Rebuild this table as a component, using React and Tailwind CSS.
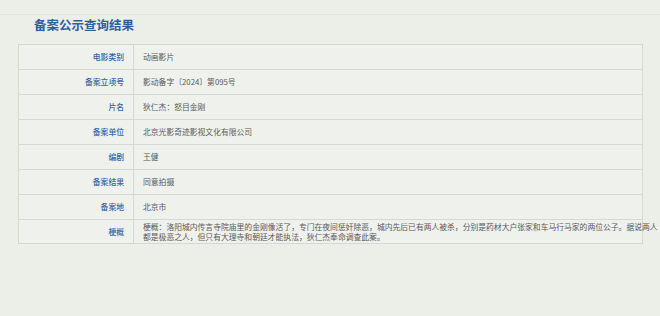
import React from "react";

const rows = [
  { label: "电影类别", value: "动画影片" },
  { label: "备案立项号", value: "影动备字〔2024〕第095号" },
  { label: "片名", value: "狄仁杰：怒目金刚" },
  { label: "备案单位", value: "北京光影奇迹影视文化有限公司" },
  { label: "编剧", value: "王健" },
  { label: "备案结果", value: "同意拍摄" },
  { label: "备案地", value: "北京市" },
];

const summaryLine1 =
  "梗概：洛阳城内传言寺院庙里的金刚像活了，专门在夜间惩奸除恶，城内先后已有两人被杀，分别是药材大户张家和车马行马家的两位公子。据说两人";
const summaryLine2 = "都是极恶之人，但只有大理寺和朝廷才能执法，狄仁杰奉命调查此案。";

const App = () => {
  return (
    <div
      className="w-[660px] h-[316px] bg-[#eceee8] overflow-hidden"
      style={{ fontFamily: '"Noto Sans CJK SC", "Noto Sans", sans-serif' }}
    >
      <div className="h-[15px] border-b border-[#e2e5de]"></div>
      <div className="pl-[34px] pt-[1px] h-[29px]">
        <p className="text-[12.5px] leading-[18px] font-bold text-[#2d5f9f]">
          备案公示查询结果
        </p>
      </div>
      <div className="ml-[18px] w-[625px] border border-[#d6d9d2] bg-[#eff1ec]">
        {rows.map((item) => {
          return (
            <div
              key={item.label}
              className="flex h-[25px] border-b border-[#d6d9d2] text-[7.8px]"
            >
              <div className="w-[115px] shrink-0 flex items-center justify-end pr-[9px] border-r border-[#d6d9d2] text-[#2f66a6] font-medium">
                {item.label}
              </div>
              <div className="flex items-center pl-[9px] text-[#5a5a5a]">
                {item.value}
              </div>
            </div>
          );
        })}
        <div className="flex h-[23px] text-[7.8px]">
          <div className="w-[115px] shrink-0 flex items-center justify-end pr-[9px] border-r border-[#d6d9d2] text-[#2f66a6] font-medium">
            梗概
          </div>
          <div className="flex-1 flex items-center pl-[9px] text-[#5a5a5a] leading-[10px]">
            <p className="whitespace-nowrap">
              {summaryLine1}
              <br />
              {summaryLine2}
            </p>
          </div>
        </div>
      </div>
    </div>
  );
};

export default App;
